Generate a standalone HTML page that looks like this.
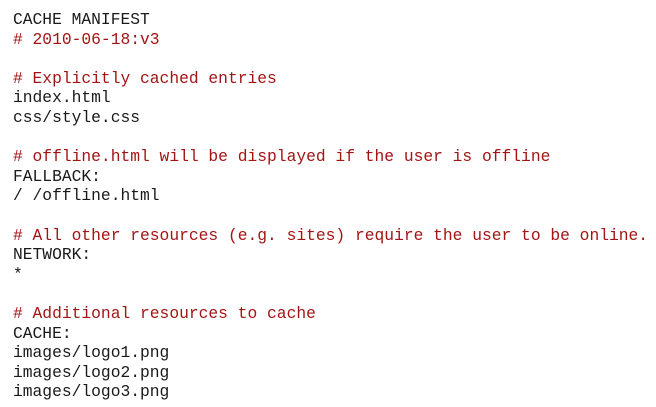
<!DOCTYPE html>
<html><head><meta charset="utf-8"><style>
html,body{margin:0;padding:0;background:#fff;width:656px;height:407px;overflow:hidden}
pre{margin:0;position:absolute;left:13px;top:10px;font-family:"Liberation Mono",monospace;font-size:16.3px;line-height:19.6px;color:#1a1a1a}
.c{color:#a31515}
</style></head><body><pre>CACHE MANIFEST
<span class="c"># 2010-06-18:v3</span>

<span class="c"># Explicitly cached entries</span>
index.html
css/style.css

<span class="c"># offline.html will be displayed if the user is offline</span>
FALLBACK:
/ /offline.html

<span class="c"># All other resources (e.g. sites) require the user to be online.</span>
NETWORK:
*

<span class="c"># Additional resources to cache</span>
CACHE:
images/logo1.png
images/logo2.png
images/logo3.png</pre></body></html>
